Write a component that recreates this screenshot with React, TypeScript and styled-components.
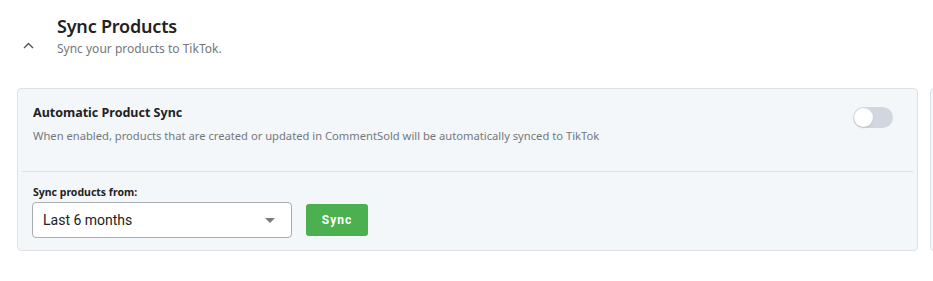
import React, { useState } from "react";
import styled, { createGlobalStyle } from "styled-components";

const Global = createGlobalStyle`
  html, body { margin: 0; padding: 0; background: #ffffff; }
  body { font-family: "Noto Sans", "Open Sans", sans-serif; -webkit-font-smoothing: antialiased; }
  * { box-sizing: border-box; }
`;

const Page = styled.div`
  width: 933px;
  height: 281px;
  overflow: hidden;
  padding-top: 14px;
`;

const Header = styled.div`
  display: flex;
  align-items: flex-start;
  padding-left: 21px;
`;

const ChevronButton = styled.div`
  width: 14px;
  height: 10px;
  margin-top: 26px;
  margin-right: 22px;
  display: flex;
  align-items: center;
  justify-content: center;
`;

const Titles = styled.div`
  display: flex;
  flex-direction: column;
`;

const Title = styled.h2`
  margin: 0;
  font-family: "Noto Sans", sans-serif;
  font-weight: 600;
  font-size: 18px;
  line-height: 24px;
  color: #222222;
  letter-spacing: -0.2px;
`;

const Subtitle = styled.p`
  margin: 2px 0 0;
  font-family: "Noto Sans", sans-serif;
  font-size: 12px;
  line-height: 18px;
  color: #73777c;
`;

const CardRow = styled.div`
  display: flex;
  gap: 12px;
  margin-top: 30px;
  padding-left: 17px;
`;

const Card = styled.div<{ $width?: number }>`
  flex: ${(p) => (p.$width ? `0 0 ${p.$width}px` : "1 0 200px")};
  height: 163px;
  background: #f4f7fa;
  border: 1px solid #dde2e8;
  border-radius: 4px;
  display: flex;
  flex-direction: column;
`;

const TopSection = styled.div`
  height: 82px;
  padding: 15px 24px 0 15px;
  display: flex;
  justify-content: space-between;
  align-items: flex-start;
`;

const SettingText = styled.div`
  display: flex;
  flex-direction: column;
`;

const SettingTitle = styled.div`
  font-family: "Noto Sans", sans-serif;
  font-weight: 700;
  font-size: 12.5px;
  line-height: 18px;
  color: #222222;
`;

const SettingDesc = styled.div`
  margin-top: 6px;
  font-family: "Noto Sans", sans-serif;
  font-size: 11.2px;
  line-height: 16px;
  color: #73777c;
`;

const Track = styled.button<{ $on: boolean }>`
  margin-top: 3px;
  width: 40px;
  height: 21px;
  border-radius: 11px;
  border: none;
  padding: 1px;
  background: ${(p) => (p.$on ? "#4caf50" : "#d2d6de")};
  display: flex;
  justify-content: ${(p) => (p.$on ? "flex-end" : "flex-start")};
  cursor: pointer;
`;

const Knob = styled.span`
  width: 19px;
  height: 19px;
  border-radius: 50%;
  background: #ffffff;
  box-shadow: 0 1px 2px rgba(0, 0, 0, 0.12);
`;

const Divider = styled.div`
  height: 1px;
  background: #dde2e8;
  margin: 0 4px 0 4px;
`;

const BottomSection = styled.div`
  padding: 13px 15px 0 14px;
  display: flex;
  flex-direction: column;
`;

const FieldLabel = styled.label`
  font-family: "Noto Sans", sans-serif;
  font-weight: 700;
  font-size: 10.5px;
  line-height: 14px;
  color: #222222;
  margin-left: 1px;
`;

const FieldRow = styled.div`
  display: flex;
  align-items: center;
  gap: 14px;
  margin-top: 3px;
`;

const SelectBox = styled.div`
  width: 260px;
  height: 36px;
  background: #ffffff;
  border: 1px solid #a9acb0;
  border-radius: 4px;
  display: flex;
  align-items: center;
  justify-content: space-between;
  padding: 0 16px 0 10px;
  font-family: Roboto, sans-serif;
  font-size: 14px;
  color: #222222;
`;

const Caret = styled.span`
  width: 0;
  height: 0;
  border-left: 5px solid transparent;
  border-right: 5px solid transparent;
  border-top: 5px solid #7c7c7c;
`;

const SyncButton = styled.button`
  width: 62px;
  height: 32px;
  border: none;
  border-radius: 3px;
  background: #4caf50;
  color: #ffffff;
  font-family: Roboto, sans-serif;
  font-weight: 700;
  font-size: 12px;
  letter-spacing: 1px;
  cursor: pointer;
`;

export default function App() {
  const [on, setOn] = useState(false);
  return (
    <Page>
      <Global />
      <Header>
        <ChevronButton>
          <svg width="11" height="7" viewBox="0 0 11 7" fill="none">
            <path d="M1 6 L5.5 1.5 L10 6" stroke="#555" strokeWidth="1.4" />
          </svg>
        </ChevronButton>
        <Titles>
          <Title>Sync Products</Title>
          <Subtitle>Sync your products to TikTok.</Subtitle>
        </Titles>
      </Header>
      <CardRow>
        <Card $width={901}>
          <TopSection>
            <SettingText>
              <SettingTitle>Automatic Product Sync</SettingTitle>
              <SettingDesc>
                When enabled, products that are created or updated in CommentSold will be automatically synced to TikTok
              </SettingDesc>
            </SettingText>
            <Track $on={on} onClick={() => setOn(!on)} aria-label="Automatic Product Sync">
              <Knob />
            </Track>
          </TopSection>
          <Divider />
          <BottomSection>
            <FieldLabel>Sync products from:</FieldLabel>
            <FieldRow>
              <SelectBox>
                <span>Last 6 months</span>
                <Caret />
              </SelectBox>
              <SyncButton>Sync</SyncButton>
            </FieldRow>
          </BottomSection>
        </Card>
        <Card>
          <TopSection />
          <Divider />
        </Card>
      </CardRow>
    </Page>
  );
}
